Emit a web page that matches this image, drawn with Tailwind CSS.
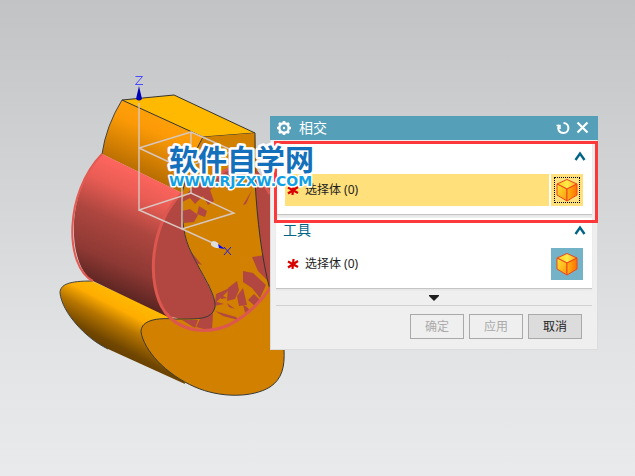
<!DOCTYPE html>
<html lang="zh-CN">
<head>
  <meta charset="UTF-8">
  <meta name="viewport" content="width=device-width, initial-scale=1.0">
  <title>相交</title>
  <script src="https://cdn.jsdelivr.net/npm/@tailwindcss/browser@4"></script>
</head>
<body class="font-['Noto_Sans','Noto_Sans_CJK_SC',sans-serif] text-[#222]">

  <main class="relative min-h-screen overflow-hidden bg-linear-to-b from-[#c2c3c5] via-[#e2e4e6] via-75% to-[#e8eaeb]">

    <!-- Model view -->
    <svg class="absolute left-0 top-0" width="635" height="476" viewBox="0 0 635 476" fill="none" aria-label="model">
      <defs>
        <linearGradient id="side" gradientUnits="userSpaceOnUse" x1="158" y1="112" x2="133" y2="172">
          <stop offset="0" stop-color="#ffa00a"/>
          <stop offset=".3" stop-color="#fb9a06"/>
          <stop offset="1" stop-color="#b66c00"/>
        </linearGradient>
        <linearGradient id="cyl" gradientUnits="userSpaceOnUse" x1="155" y1="176" x2="106" y2="292">
          <stop offset="0" stop-color="#ff665e"/>
          <stop offset=".2" stop-color="#e85c54"/>
          <stop offset=".45" stop-color="#ad463f"/>
          <stop offset=".75" stop-color="#8f3934"/>
          <stop offset="1" stop-color="#572320"/>
        </linearGradient>
        <linearGradient id="blade" gradientUnits="userSpaceOnUse" x1="120" y1="292" x2="92" y2="346">
          <stop offset="0" stop-color="#ffba00"/>
          <stop offset=".25" stop-color="#ffad00"/>
          <stop offset=".5" stop-color="#b57400"/>
          <stop offset=".8" stop-color="#714700"/>
          <stop offset="1" stop-color="#603b00"/>
        </linearGradient>
        <clipPath id="face">
          <path d="M182 197C182 220 183 237 192 254C202 275 216 294 215 307C212 320 198 319 176 319C190 329 205 331 218 328C241 322 258 306 270 288L262 240L255 133L203 137Q191 157 182 193Z"/>
        </clipPath>
      </defs>

      <!-- lower blade -->
      <path d="M60 293C60 284 70 281 92 281L176 319L185 384L108 349C85 338 62 312 60 293Z" fill="url(#blade)"/>
      <path d="M92 281C70 281 60 284 60 293C62 312 85 338 108 349" stroke="#444"/>
      <path d="M176 319C150 317 141 323 141 332C144 350 165 374 195 387C220 398 252 398 270 387C282 379 285 367 284 349V240H255L215 300Z" fill="#d18000"/>

      <!-- upper body -->
      <path d="M122 100L203 137Q191 157 182 193L102 154Q106 126 122 100Z" fill="url(#side)"/>
      <path d="M122 100L174 95L255 133L203 137Z" fill="#ffb900" stroke="#333"/>
      <path d="M203 137Q191 157 182 193V197C182 220 183 237 192 254C202 275 216 294 215 307L250 315L270 288L262 240L255 133Z" fill="#d18000"/>
      <path d="M102 154Q106 126 122 100" stroke="#444"/>
      <path d="M255 168Q264 178 270 188V288C260 250 256 211 255 168Z" fill="#b24640"/>

      <!-- cylinder -->
      <path d="M102 154L182 193C152 225 150 285 168 317L93 281C68 266 64 193 102 154Z" fill="url(#cyl)"/>
      <path d="M102 154C64 193 64 266 93 281" stroke="#e25a53" stroke-width="2"/>
      <path d="M182 193C150 225 143 292 168 316Q176 319 192 319C207 319 215 315 215 305C215 294 202 275 192 254C183 237 182 220 182 193Z" fill="#b24640"/>

      <!-- overlapping faces -->
      <g clip-path="url(#face)" fill="#b24640">
        <path d="M182 199L193 187L204 181L216 185L210 190L214 201L208 205L203 196L195 204L190 198L182 202Z"/>
        <path d="M182 211L190 209L198 215L194 222L184 223Z"/>
        <path d="M199 206L207 211L205 217L197 214Z"/>
        <path d="M213 184L222 171L237 166L255 171L250 180L235 174L224 182Z"/>
        <path d="M243 205L252 190L246 204Z"/>
        <path d="M252 257L265 255L270 283L258 271Z"/>
        <path d="M243 271L253 273L266 285L260 298L252 288L243 282Z"/>
        <path d="M228 288L237 281L239 290L235 299L227 301Z"/>
        <path d="M237 296L243 288L247 305L239 306Z"/>
        <path d="M248 300L254 294L261 301L256 307Z"/>
        <path d="M216 294L232 287L223 296L215 303Z"/>
        <path d="M215 311L236 317L238 320L223 316Z"/>
        <path d="M182 320L198 320L195 328Z"/>
        <path d="M200 319L213 313L212 331L196 327Z"/>
        <path d="M192 253L202 265L196 263L206 281L211 287L200 278L186 249Z"/>
        <path d="M211 300L224 304L214 306ZM227 303L235 309L229 307ZM247 307L251 312L246 316L243 305ZM221 295L227 298L221 299Z"/>
      </g>
      <path d="M203 137Q191 157 182 193V197C182 220 183 237 192 254C202 275 216 294 215 307C212 320 198 319 176 319C150 317 141 323 141 332C144 350 165 374 195 387C220 398 252 398 270 387C282 379 285 367 284 349" stroke="#383838"/>
      <path d="M255 133V180C257 220 262 260 270 290" stroke="#333"/>
      <path d="M183 192C149 223 146 285 165 312C181 333 208 334 229 325Q254 312 271 287" stroke="#dc5750" stroke-width="3"/>
      <path d="M212 181Q228 164 243 168Q258 172 270 194" stroke="#dc5750" stroke-width="3"/>

      <!-- datum axes -->
      <g stroke="#d8c7c1" stroke-width="1.4">
        <path d="M139 103V210L191 193L234 213L182 229L139 210"/>
        <path d="M139 148L191 132V193M139 148L182 168V229L215 244M182 168L234 151L191 132"/>
      </g>
      <path d="M139 86L142 99Q139 102 136 99Z" fill="#0000b8"/>
      <path d="M211 243Q213 239 218 243L221 248Q215 249 211 245Z" fill="#ddd"/>
      <path d="M218 244L225 249L219 248Z" fill="#00f"/>
      <path d="M135.500 76.500H142.500L135.500 84.500H143" stroke="#4949ff"/>
      <path d="M224 247L231 255M231 247L224 255" stroke="#2020e8"/>
    </svg>

    <!-- Dialog -->
    <section class="absolute left-[270px] top-[116px] w-[328px] border border-t-0 border-[#dcdcdc] bg-[#efefef]" aria-labelledby="dialogTitle">
      <header class="-mx-px flex h-6 items-center bg-[#559fb8] px-[7px] text-white">
        <svg class="mr-1.5 size-4" viewBox="0 0 16 16" fill="none" stroke="currentColor">
          <circle cx="7" cy="8" r="4.700" stroke-width="2.400"/>
          <circle cx="7" cy="8" r="1.200" fill="currentColor" stroke="none"/>
          <path d="M7 1V4M7 12V15M0 8H3M11 8H14M2 3L4 5M10 11L12 13M12 3L10 5M4 11L2 13" stroke-width="2.600"/>
        </svg>
        <h1 id="dialogTitle" class="text-sm leading-6">相交</h1>
        <button class="ml-auto" aria-label="重置">
          <svg class="size-4" viewBox="0 0 16 16" fill="none" stroke="currentColor" stroke-width="2">
            <path d="M8.500 3C15 3 15 13 8.500 13C4 13 2 9 4 5"/>
            <path d="M1.500 5.500H5V9" stroke-width="1.500"/>
          </svg>
        </button>
        <button class="ml-1" aria-label="关闭">
          <svg class="size-4" viewBox="0 0 16 16" fill="none" stroke="currentColor" stroke-width="2.200">
            <path d="M2.500 2.500L12.500 12.500M12.500 2.500L2.500 12.500"/>
          </svg>
        </button>
      </header>

      <div class="flex flex-col gap-[3px] px-[5px] pt-1">
        <div class="border-b border-[#c4c4c4] bg-white pb-2 shadow-xs">
          <div class="flex h-[30px] items-start justify-end px-1 pt-1">
            <button aria-label="折叠目标">
              <svg class="size-4" viewBox="0 0 16 16" fill="none" stroke="#006487" stroke-width="2.400"><path d="M3.500 12L8 5.500L12.500 12"/></svg>
            </button>
          </div>
          <div class="flex h-8 gap-0.5 pl-[9px] pr-[9px]">
            <div class="flex flex-1 items-center gap-1.5 bg-[#ffe07a] pl-0.5">
              <svg class="size-3" viewBox="0 0 12 12" stroke="#d90000" stroke-width="2.200"><path d="M6.500 1L5.500 11M1 3.500L11 9M11 3L1 9.500"/></svg>
              <span class="text-xs">选择体 (0)</span>
            </div>
            <button class="flex size-8 items-center justify-center bg-[#ffe07a]" aria-label="选择目标体">
              <span class="flex size-[26px] items-center justify-center border border-dotted border-black">
                <svg class="size-6" viewBox="0 0 24 24" fill="none">
                  <defs>
                    <linearGradient id="cubeTop" x2="1"><stop stop-color="#ffc21c"/><stop offset=".5" stop-color="#ffed48"/><stop offset="1" stop-color="#ffa21a"/></linearGradient>
                    <linearGradient id="cubeLeft" x2="1" y2="1"><stop stop-color="#ffe72f"/><stop offset="1" stop-color="#ff9610"/></linearGradient>
                    <linearGradient id="cubeRight" x2="1"><stop stop-color="#ffb415"/><stop offset="1" stop-color="#ff7100"/></linearGradient>
                  </defs>
                  <g stroke="#f0441c" stroke-linejoin="round">
                    <path d="M2 6L12 1.500L22 6L12 11Z" fill="url(#cubeTop)"/>
                    <path d="M2 6L12 11V23L2 17Z" fill="url(#cubeLeft)"/>
                    <path d="M12 11L22 6V17L12 23Z" fill="url(#cubeRight)"/>
                  </g>
                </svg>
              </span>
            </button>
          </div>
        </div>

        <div class="border-b border-[#c4c4c4] bg-white pb-2 shadow-xs">
          <div class="flex h-[30px] items-start justify-between pl-1.5 pr-1 pt-1">
            <h2 class="pl-px text-sm leading-4 text-[#006487]">工具</h2>
            <button aria-label="折叠工具">
              <svg class="size-4" viewBox="0 0 16 16" fill="none" stroke="#006487" stroke-width="2.400"><path d="M3.500 12L8 5.500L12.500 12"/></svg>
            </button>
          </div>
          <div class="flex h-8 gap-0.5 pl-[9px] pr-[9px]">
            <div class="flex flex-1 items-center gap-1.5 pl-0.5">
              <svg class="size-3" viewBox="0 0 12 12" stroke="#d90000" stroke-width="2.200"><path d="M6.500 1L5.500 11M1 3.500L11 9M11 3L1 9.500"/></svg>
              <span class="text-xs">选择体 (0)</span>
            </div>
            <button class="flex size-8 items-center justify-center bg-[#74b2c8]" aria-label="选择工具体">
              <svg class="size-6" viewBox="0 0 24 24" fill="none" stroke="#f0441c" stroke-linejoin="round">
                <path d="M2 6L12 1.500L22 6L12 11Z" fill="url(#cubeTop)"/>
                <path d="M2 6L12 11V23L2 17Z" fill="url(#cubeLeft)"/>
                <path d="M12 11L22 6V17L12 23Z" fill="url(#cubeRight)"/>
              </svg>
            </button>
          </div>
        </div>
      </div>

      <div class="mx-[5px] flex h-[17px] items-end justify-center border-b border-[#d0d0d0] pb-1">
        <button class="block" aria-label="更多">
          <svg class="block h-1.5 w-2.5" viewBox="0 0 10 6" fill="#1e1e1e"><path d="M0 0H10V1L5 6L0 1Z"/></svg>
        </button>
      </div>

      <footer class="flex justify-end gap-[5px] pb-[10px] pr-[15px] pt-2 text-xs">
        <button class="h-[25px] w-[54px] border border-[#a9a9a9] text-[#aaa]" disabled>确定</button>
        <button class="h-[25px] w-[54px] border border-[#a9a9a9] text-[#aaa]" disabled>应用</button>
        <button class="h-[25px] w-[54px] border border-[#a9a9a9] bg-[#dcdcdc]">取消</button>
      </footer>
    </section>

    <!-- Highlight frame -->
    <div class="pointer-events-none absolute left-[274px] top-[141px] h-[82px] w-[324px] border-3 border-[#fc383b]"></div>

    <!-- Watermark -->
    <svg class="pointer-events-none absolute left-[164px] top-[130px]" width="156" height="62" stroke="#fff" stroke-linejoin="round" paint-order="stroke">
      <text x="5" y="41" class="font-['Noto_Sans_CJK_SC',sans-serif] text-[29px] font-bold" fill="#1470bb" stroke-width="5">软件自学网</text>
      <text x="5" y="56" class="font-['DejaVu_Sans',sans-serif] text-sm font-bold" fill="#10a0e6" stroke-width="3">WWW.RJZXW.COM</text>
    </svg>
  </main>

</body>
</html>
